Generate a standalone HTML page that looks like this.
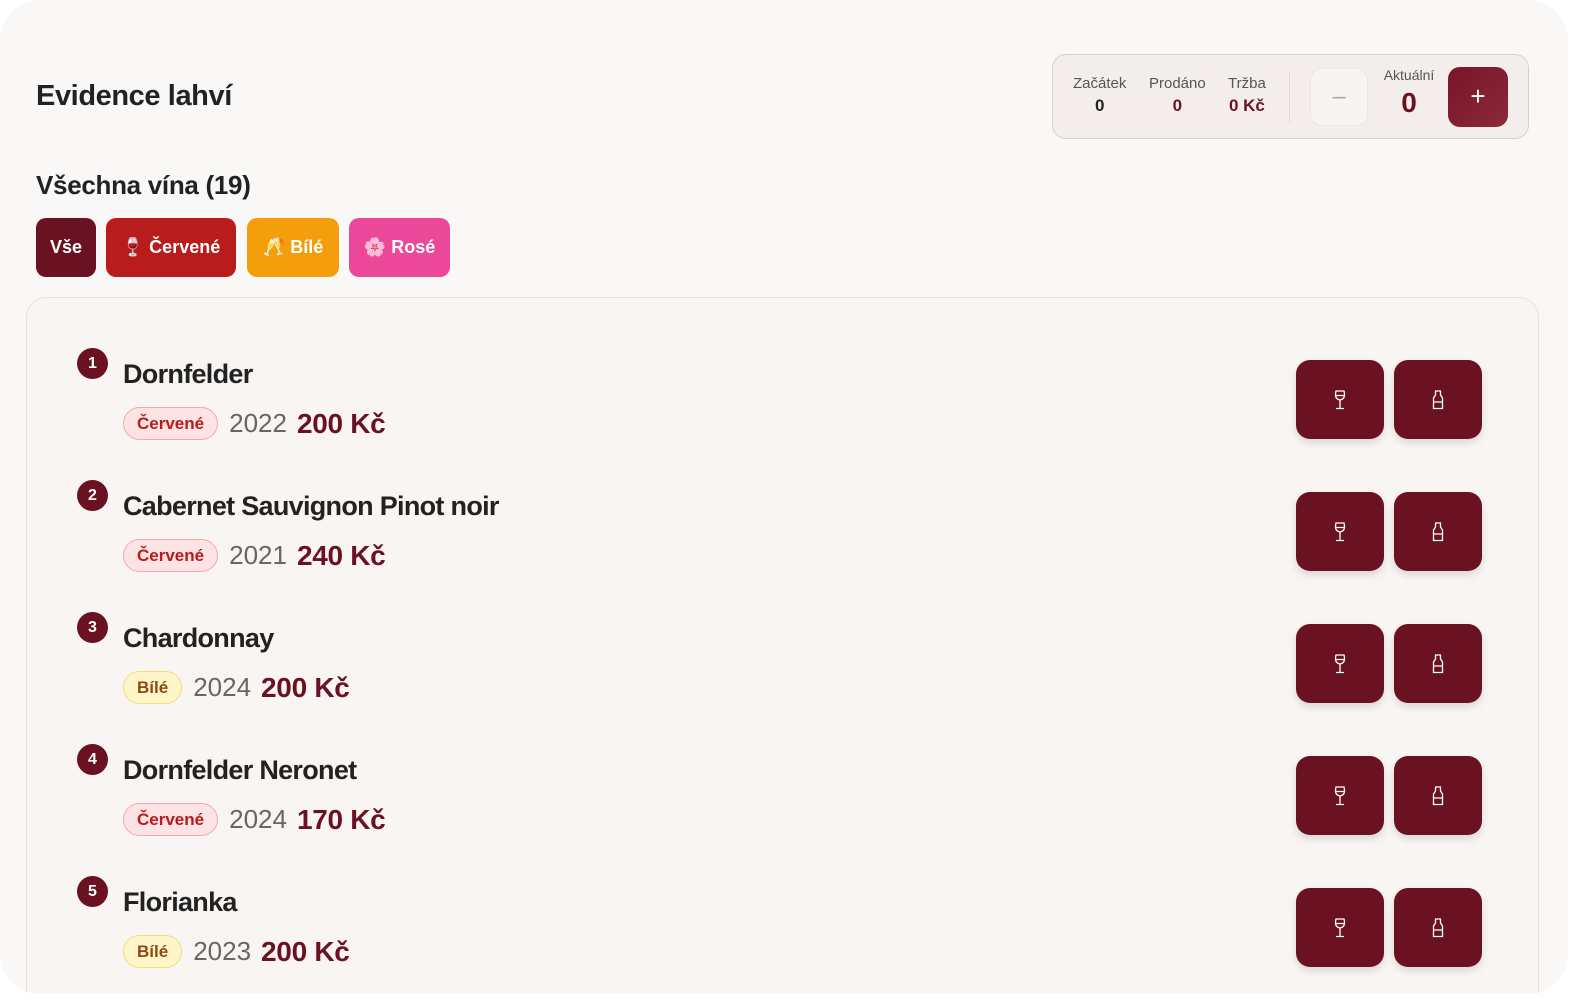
<!DOCTYPE html>
<html><head><meta charset="utf-8"><style>
*{box-sizing:border-box;margin:0;padding:0}
html,body{width:1576px;height:1000px;overflow:hidden;background:#fff}
body{font-family:"Liberation Sans","Noto Sans CJK SC",sans-serif;color:#222}
.frame{position:absolute;left:0;top:0;width:1568px;height:994px;background:#faf8f6;border-radius:40px;overflow:hidden}
h1{position:absolute;left:36px;top:80px;font-size:29px;font-weight:700;color:#222;letter-spacing:-0.4px}
.stats{position:absolute;left:1052px;top:54px;width:477px;height:85px;background:#f3eeeb;border:1px solid #dccfcb;border-radius:14px}
.st{position:absolute;top:20px;text-align:center;font-size:15px;color:#555}
.st b{display:block;font-size:17px;margin-top:4px;color:#222}
.st b.r{color:#6b1222}
.sep{position:absolute;left:236px;top:16px;width:1px;height:52px;background:#e2d8d5}
.minus{position:absolute;left:257px;top:13px;width:58px;height:58px;border-radius:12px;background:#f8f4f2;border:1px solid #eee6e3;color:#aaa;font-size:24px;text-align:center;line-height:56px}
.akt{position:absolute;left:326px;top:12px;width:60px;text-align:center;font-size:14px;color:#555}
.akt b{display:block;font-size:28px;color:#6b1222;margin-top:4px}
.plus{position:absolute;left:395px;top:12px;width:60px;height:60px;border-radius:12px;background:linear-gradient(135deg,#7a1428,#8a2a3a);color:#fff;font-size:26px;text-align:center;line-height:58px}
h2{position:absolute;left:36px;top:170px;font-size:26px;font-weight:700;color:#222;letter-spacing:-0.3px}
.f{position:absolute;top:218px;height:59px;border-radius:10px;color:#fff;font-weight:700;font-size:18px;line-height:59px;text-align:center}
.card{position:absolute;left:26px;top:297px;width:1513px;height:740px;background:#f8f5f2;border:1px solid #e8e2dd;border-radius:20px}
.row{position:absolute;left:0;width:100%;height:132px}
.num{position:absolute;left:50px;top:50px;width:31px;height:31px;border-radius:50%;background:#6b1222;color:#fff;font-size:16px;font-weight:700;text-align:center;line-height:31px}
.name{position:absolute;left:96px;top:61px;font-size:27px;font-weight:700;color:#222;letter-spacing:-0.7px}
.meta{position:absolute;left:96px;top:109px;display:flex;align-items:center;height:33px}
.badge{height:33px;border-radius:17px;padding:0 13px;font-size:17px;font-weight:700;line-height:31px;margin-right:11px}
.c{background:#fde3e3;border:1px solid #f4a8ad;color:#b71c1c}
.w{background:#fef6c9;border:1px solid #f5dc80;color:#8a4a10}
.yr{font-size:26px;color:#666;margin-right:10px}
.pr{font-size:28px;font-weight:700;color:#6b1222;letter-spacing:-0.3px}
.btn{position:absolute;top:62px;width:88px;height:79px;border-radius:14px;background:#6a1222;box-shadow:0 4px 8px rgba(0,0,0,.12);display:flex;align-items:center;justify-content:center}
</style></head><body><div class="frame">
<h1>Evidence lahví</h1>
<div class="stats">
<div class="st" style="left:20px">Začátek<b>0</b></div>
<div class="st" style="left:96px">Prodáno<b class="r">0</b></div>
<div class="st" style="left:175px">Tržba<b class="r">0 Kč</b></div>
<div class="sep"></div>
<div class="minus">–</div>
<div class="akt">Aktuální<b>0</b></div>
<div class="plus">+</div>
</div>
<h2>Všechna vína (19)</h2>
<div class="f" style="left:36px;width:60px;background:#6b1222">Vše</div>
<div class="f" style="left:106px;width:130px;background:#b91c1c">🍷 Červené</div>
<div class="f" style="left:247px;width:92px;background:#f59e0b">🥂 Bílé</div>
<div class="f" style="left:349px;width:101px;background:#ec4899">🌸 Rosé</div>
<div class="card">
<div class="row" style="top:0"><div class="num">1</div><div class="name">Dornfelder</div><div class="meta"><span class="badge c">Červené</span><span class="yr">2022</span><span class="pr">200 Kč</span></div>
<div class="btn" style="left:1269px"><svg width="14" height="20" viewBox="0 0 14 20" fill="none" stroke="#fff" stroke-width="1.3"><path d="M3 1h8c1 4 1 8-4 9C2 9 2 5 3 1zM2.5 5.5h9M7 10v8M3 18.5h8"/></svg></div>
<div class="btn" style="left:1367px"><svg width="12" height="20" viewBox="0 0 12 20" fill="none" stroke="#fff" stroke-width="1.3"><path d="M3 1h6M3.5 1v4L1.5 8v10.5h9V8L8.5 5V1M1.5 12h9"/></svg></div></div>
<div class="row" style="top:132px"><div class="num">2</div><div class="name">Cabernet Sauvignon Pinot noir</div><div class="meta"><span class="badge c">Červené</span><span class="yr">2021</span><span class="pr">240 Kč</span></div>
<div class="btn" style="left:1269px"><svg width="14" height="20" viewBox="0 0 14 20" fill="none" stroke="#fff" stroke-width="1.3"><path d="M3 1h8c1 4 1 8-4 9C2 9 2 5 3 1zM2.5 5.5h9M7 10v8M3 18.5h8"/></svg></div>
<div class="btn" style="left:1367px"><svg width="12" height="20" viewBox="0 0 12 20" fill="none" stroke="#fff" stroke-width="1.3"><path d="M3 1h6M3.5 1v4L1.5 8v10.5h9V8L8.5 5V1M1.5 12h9"/></svg></div></div>
<div class="row" style="top:264px"><div class="num">3</div><div class="name">Chardonnay</div><div class="meta"><span class="badge w">Bílé</span><span class="yr">2024</span><span class="pr">200 Kč</span></div>
<div class="btn" style="left:1269px"><svg width="14" height="20" viewBox="0 0 14 20" fill="none" stroke="#fff" stroke-width="1.3"><path d="M3 1h8c1 4 1 8-4 9C2 9 2 5 3 1zM2.5 5.5h9M7 10v8M3 18.5h8"/></svg></div>
<div class="btn" style="left:1367px"><svg width="12" height="20" viewBox="0 0 12 20" fill="none" stroke="#fff" stroke-width="1.3"><path d="M3 1h6M3.5 1v4L1.5 8v10.5h9V8L8.5 5V1M1.5 12h9"/></svg></div></div>
<div class="row" style="top:396px"><div class="num">4</div><div class="name">Dornfelder Neronet</div><div class="meta"><span class="badge c">Červené</span><span class="yr">2024</span><span class="pr">170 Kč</span></div>
<div class="btn" style="left:1269px"><svg width="14" height="20" viewBox="0 0 14 20" fill="none" stroke="#fff" stroke-width="1.3"><path d="M3 1h8c1 4 1 8-4 9C2 9 2 5 3 1zM2.5 5.5h9M7 10v8M3 18.5h8"/></svg></div>
<div class="btn" style="left:1367px"><svg width="12" height="20" viewBox="0 0 12 20" fill="none" stroke="#fff" stroke-width="1.3"><path d="M3 1h6M3.5 1v4L1.5 8v10.5h9V8L8.5 5V1M1.5 12h9"/></svg></div></div>
<div class="row" style="top:528px"><div class="num">5</div><div class="name">Florianka</div><div class="meta"><span class="badge w">Bílé</span><span class="yr">2023</span><span class="pr">200 Kč</span></div>
<div class="btn" style="left:1269px"><svg width="14" height="20" viewBox="0 0 14 20" fill="none" stroke="#fff" stroke-width="1.3"><path d="M3 1h8c1 4 1 8-4 9C2 9 2 5 3 1zM2.5 5.5h9M7 10v8M3 18.5h8"/></svg></div>
<div class="btn" style="left:1367px"><svg width="12" height="20" viewBox="0 0 12 20" fill="none" stroke="#fff" stroke-width="1.3"><path d="M3 1h6M3.5 1v4L1.5 8v10.5h9V8L8.5 5V1M1.5 12h9"/></svg></div></div>
</div>
</div></body></html>
